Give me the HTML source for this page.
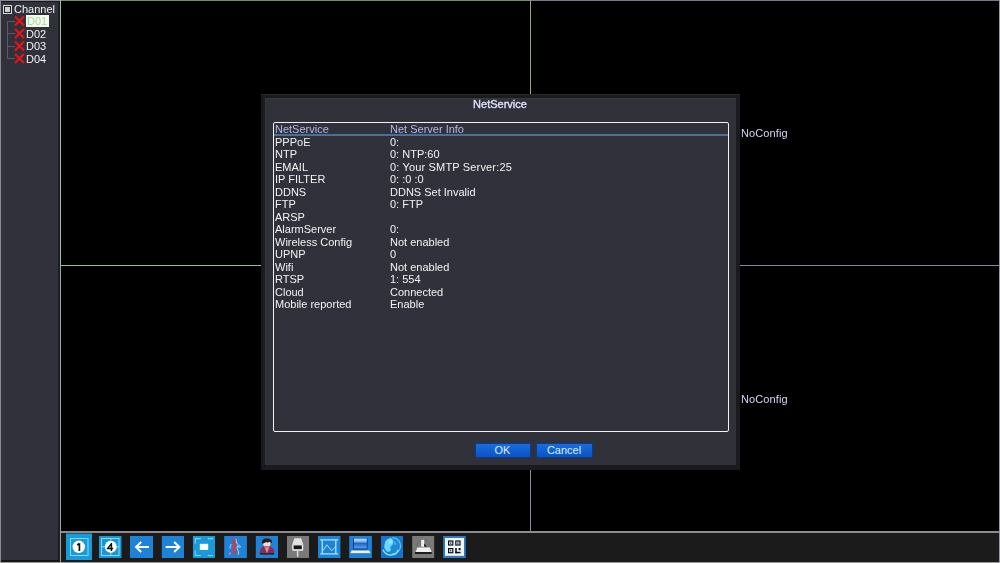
<!DOCTYPE html>
<html><head><meta charset="utf-8">
<style>
*{margin:0;padding:0;box-sizing:border-box}
html,body{width:1000px;height:563px;overflow:hidden;background:#000;font-family:"Liberation Sans",sans-serif;font-size:11px}
.a{position:absolute}
#left{left:0;top:0;width:60px;height:563px;background:#31313c;border-left:1px solid #8a8a92;border-top:1px solid #8a8a92;border-bottom:1px solid #9a9a9a}
#left .inner{position:absolute;left:0;top:0;right:0;bottom:0;border-top:1px solid #18181c;border-bottom:2px solid #141416;border-right:2px solid #1e1e22}
.t{will-change:transform;white-space:nowrap;line-height:12.5px;color:#f2f2f2}
.vl{width:1px}
.hl{height:1px}
#tb{left:61px;top:531px;width:939px;height:32px;background:#1b1b1b;border-top:2px solid #8c8c8e;border-bottom:1px solid #9a9a9a}
.ic{position:absolute;top:536px;width:22px;height:22px}
#dlg{left:261px;top:94px;width:479px;height:376px;background:#1a1b1f;border-top:1px solid #2a2a2c}
#dbody{left:265px;top:98px;width:471px;height:367px;background:#31313a;border-left:1px solid #38383c;border-top:1px solid #38383c}
#list{left:273px;top:122px;width:456px;height:310px;border:1px solid #f2f2f2;border-radius:2px;background:#31313c}
.btn{position:absolute;top:443px;height:15px;width:57px;background:linear-gradient(#1a6ce0,#0d52c2);border:1px solid #0a3c8e;color:#d8f2ff;text-align:center;line-height:13px;font-size:11px}
</style></head><body>

<!-- left channel panel -->
<div id="left" class="a"><div class="inner"></div></div>
<!-- checkbox -->
<div class="a" style="left:3px;top:5px;width:9px;height:9px;border:1px solid #d8d8d8;background:#222"></div>
<div class="a" style="left:5px;top:7px;width:5px;height:5px;background:#d0d0d0"></div>
<div class="a t" style="left:14px;top:3px">Channel</div>
<!-- tree lines -->
<div class="a" style="left:7px;top:21px;width:1px;height:38px;background:#5a5a64"></div>
<div class="a" style="left:7px;top:21px;width:8px;height:1px;background:#5a5a64"></div>
<div class="a" style="left:7px;top:33px;width:8px;height:1px;background:#5a5a64"></div>
<div class="a" style="left:7px;top:46px;width:8px;height:1px;background:#5a5a64"></div>
<div class="a" style="left:7px;top:58px;width:8px;height:1px;background:#5a5a64"></div>
<!-- red X icons -->
<svg class="a" style="left:14px;top:15px" width="11" height="50" viewBox="0 0 11 50">
<defs><filter id="bx" x="-20%" y="-5%" width="140%" height="110%"><feGaussianBlur stdDeviation="0.45"/></filter></defs><g stroke="#e01818" stroke-width="2.4" stroke-linecap="butt" filter="url(#bx)">
<path d="M1 1.5 L10 10.5 M10 1.5 L1 10.5"/>
<path d="M1 14 L10 23 M10 14 L1 23"/>
<path d="M1 26.5 L10 35.5 M10 26.5 L1 35.5"/>
<path d="M1 39 L10 48 M10 39 L1 48"/>
</g></svg>
<div class="a" style="left:26px;top:15px;width:23px;height:12px;background:#f4faf0"></div>
<div class="a t" style="left:27px;top:15.3px;color:#9fdc90">D01</div>
<div class="a t" style="left:26px;top:27.8px">D02</div>
<div class="a t" style="left:26px;top:40.3px">D03</div>
<div class="a t" style="left:26px;top:52.8px">D04</div>

<!-- grid lines -->
<div class="a" style="left:60px;top:0;width:471px;height:1px;background:#6e906e"></div>
<div class="a" style="left:60px;top:0;width:1px;height:266px;background:#98c098"></div>
<div class="a" style="left:530px;top:0;width:1px;height:266px;background:#88b088"></div>
<div class="a" style="left:60px;top:265px;width:471px;height:1px;background:#98c098"></div>
<div class="a" style="left:531px;top:0;width:469px;height:1px;background:#77768a"></div>
<div class="a" style="left:60px;top:266px;width:1px;height:297px;background:#a0a0a8"></div>
<div class="a" style="left:530px;top:266px;width:1px;height:266px;background:#8a889a"></div>
<div class="a" style="left:531px;top:265px;width:469px;height:1px;background:#8a889a"></div>

<div class="a t" style="left:741.3px;top:126.8px;color:#d4d4f6;letter-spacing:0.12px">NoConfig</div>
<div class="a t" style="left:741.3px;top:392.8px;color:#d4d4f6;letter-spacing:0.12px">NoConfig</div>

<!-- toolbar -->
<div id="tb" class="a"></div>
<div class="a" style="left:999px;top:0;width:1px;height:563px;background:#9a98a8"></div>
<svg class="a" style="left:0;top:528px" width="500" height="35" viewBox="0 528 500 35">
<!-- 1 selected -->
<rect x="66" y="533.5" width="26" height="26.5" fill="#1a9ad8"/>
<rect x="70.5" y="538.5" width="17.5" height="17" fill="none" stroke="#7ddcff" stroke-width="1"/>
<circle cx="78.8" cy="546.8" r="6.2" fill="#fff"/>
<path d="M79.4 543.2V550.9M79.4 543.4L77.2 545.2" stroke="#111" stroke-width="1.7" fill="none"/>
<!-- 4 -->
<rect x="99" y="536" width="22.5" height="22" fill="#1a96d4"/>
<rect x="101.5" y="538.5" width="17.5" height="17" fill="none" stroke="#7ddcff" stroke-width="1"/>
<path d="M110.8 538.5V555.5M101.5 546.8H119" stroke="#7ddcff" stroke-width="1"/>
<circle cx="110.8" cy="546.8" r="6" fill="#fff"/>
<path d="M111.4 550.9V543.6L107.5 548.6H113.2" stroke="#111" stroke-width="1.5" fill="none" stroke-linejoin="round"/>
<!-- left arrow -->
<rect x="130" y="536" width="23" height="22" fill="#1e82d6"/>
<path d="M135.5 547H149M141.2 542L136 547L141.2 552" stroke="#fff" stroke-width="2" fill="none"/>
<!-- right arrow -->
<rect x="161.8" y="536" width="22.2" height="22" fill="#1e82d6"/>
<path d="M165.7 547H179.2M174.2 542L179.4 547L174.2 552" stroke="#fff" stroke-width="2" fill="none"/>
<!-- fullscreen -->
<rect x="193" y="536" width="22" height="22" fill="#1a9ad8"/>
<path d="M195.3 543.5V538.6H200.8M207.8 538.6H213M195.3 550.6V555.5H200.8M207.8 555.5H213" stroke="#70d8ff" stroke-width="1.1" fill="none"/>
<rect x="199.8" y="543.8" width="8.4" height="6.1" fill="#fff"/>
<!-- walking person -->
<rect x="224.2" y="536" width="22.7" height="22" fill="#1e82d6"/>
<g filter="url(#bx2)"><path d="M234.6 538.6c1.4 0 1.8 1.4 1.6 3l0.4 4 -0.2 4.5 0.4 4.5h-2.2l-0.8-3.5 -1.6 3.4h-1.8l1.6-4.6 0.4-4.2 -0.6-3.3c-0.3-2 0.8-3.8 2.8-3.8z" fill="#a8486c"/>
<path d="M235.6 538.8l1 1.6 -0.4 1.6 1.2 2 3.4 2.8 -1.6 0.6 -1.8-1.6 -0.4 2.4 1.6 3.6 -0.4 2.8M231.2 544.2l-1.6 3.6 1.2 0.6M230.4 552.6l-0.8 1.8" stroke="#bfe2ff" stroke-width="0.9" fill="none"/></g>
<!-- user -->
<rect x="255.8" y="536" width="22.2" height="22" fill="#1e82d6"/>
<g filter="url(#bx2)">
<path d="M259.6 554c0-5.5 2.4-8 7.4-8s7.4 2.5 7.4 8z" fill="#8e2c4c"/>
<path d="M264 546.4l3 7 3-7z" fill="#c86a88"/>
<path d="M266.4 548l0.6 5 0.6-5z" fill="#e8d0dc"/>
<path d="M260 553.2h14v1.4h-14z" fill="#14224e"/>
<rect x="263.2" y="541.6" width="7.2" height="4.6" rx="1.6" fill="#f4dccc"/>
<path d="M262 543.4c-0.4-3.4 1.6-4.8 5-4.8s5.4 1.4 5 4.8c-0.8-1-1.6-1.6-2.6-1.7 -0.6 0.6-1.6 0.9-2.4 0.5 -1.4 0-2.6 0.3-3.4 1.2z" fill="#2e1c14"/>
</g>
<!-- camera -->
<rect x="287" y="536" width="22" height="22" fill="#7a7a7a"/>
<path d="M294.4 538.2h6.8l2 6.4h-11z" fill="#e2e2e2"/>
<rect x="292.2" y="544.2" width="11" height="6.6" rx="1" fill="#f2f2f2"/>
<rect x="293.6" y="545.4" width="8.2" height="3.8" fill="#151515"/>
<rect x="296.9" y="551" width="1.4" height="5.8" fill="#e0e0e0"/>
<!-- chart -->
<rect x="318" y="536" width="22.4" height="22" fill="#1e82d6"/>
<path d="M320.2 539.8H338.2M320.2 553.8H338.2M322.3 539.8V553.8M335.8 539.8V553.8" stroke="#a6e6ff" stroke-width="1.3" fill="none"/>
<path d="M323 550.6L326.8 544.8L331.6 550.6L335.4 547" stroke="#a6e6ff" stroke-width="1" fill="none"/>
<!-- laptop -->
<rect x="349.2" y="536" width="22.7" height="22" fill="#1e82d6"/>
<rect x="353" y="538" width="14.5" height="11.5" rx="1" fill="#0a2e78"/>
<rect x="353.8" y="538.5" width="13" height="10" fill="url(#lg)"/>
<path d="M351.6 550.6h17.6l1.4 2.8h-20.4z" fill="#eef2f6"/><rect x="350.2" y="553.2" width="20.4" height="0.8" fill="#5a7aa0"/>
<!-- globe -->
<rect x="381" y="536" width="22" height="22" fill="#1a72cc"/>
<g filter="url(#bx2)">
<circle cx="392.4" cy="545.8" r="8.2" fill="#1f88dc"/>
<path d="M392.4 537.6a8.2 8.2 0 0 1 0 16.4" stroke="#58c8f4" stroke-width="1.3" fill="none"/>
<path d="M385.2 541.5c1.6-2.6 4-3.6 6.4-3.2l2 2.6 -1 3.8 -2.2 2.4 0.4 3.6 -2.6 1.4c-2.2-1-3.6-3-3.9-5.4z" fill="#6ad8fc"/>
<path d="M389 539.5l2.6 0.4 0.4 2.8 -2.4 1.2z" fill="#9ae8ff"/>
<path d="M394 541l2.6 1.8 -0.6 2.8 -2.4 -1.2z" fill="#3aa6ec"/>
<path d="M383 549.8c1.6 3.6 5.2 5.6 9.4 5 3.4-0.6 5.2-2.6 5.6-5" stroke="#80ecff" stroke-width="1.5" fill="none"/>
</g>
<!-- stamp -->
<rect x="412.2" y="536" width="22" height="22" fill="#7a7a7a"/>
<g filter="url(#bx2)">
<path d="M416.5 546c0.4-3.6 3-6.2 6.8-6.2s6.4 2.6 6.8 6.2" stroke="#686868" stroke-width="1" fill="none"/>
<rect x="421.2" y="539.8" width="3" height="7" fill="#f2f2f2"/>
<path d="M424.2 543.4l2.6 3.2h-2.6z" fill="#111"/>
<path d="M417.4 547.4h12.4l1.8 4.6h-16z" fill="#f0f0f0"/>
<rect x="415" y="552" width="16.8" height="2" fill="#1e1e1e"/>
</g>
<!-- QR -->
<rect x="443.1" y="536" width="22.7" height="22" fill="#2a7cc4"/>
<rect x="445" y="538" width="19" height="17.8" fill="#eef8ff"/>
<g fill="#111">
<rect x="448" y="540.4" width="5.4" height="5.2"/><rect x="455.2" y="540.4" width="5.4" height="5.2"/><rect x="448" y="548" width="5.4" height="5.3"/>
<rect x="455.2" y="548" width="1.6" height="5.3"/><rect x="455.2" y="551.8" width="5.4" height="1.5"/><rect x="458.6" y="548" width="2" height="2.2"/>
</g>
<g fill="#eef8ff">
<rect x="449.2" y="541.6" width="3" height="2.8"/><rect x="456.4" y="541.6" width="3" height="2.8"/><rect x="449.2" y="549.2" width="3" height="2.9"/>
</g>
<g fill="#111">
<rect x="450.2" y="542.2" width="1" height="1.6"/><rect x="457.4" y="542.2" width="1" height="1.6"/><rect x="450.2" y="549.8" width="1" height="1.7"/>
</g>
<defs><filter id="bx2" x="-30%" y="-10%" width="160%" height="120%"><feGaussianBlur stdDeviation="0.35"/></filter><linearGradient id="lg" x1="0" y1="0" x2="0" y2="1"><stop offset="0" stop-color="#c4e6ff"/><stop offset="0.3" stop-color="#78baf4"/><stop offset="0.5" stop-color="#2464c4"/><stop offset="1" stop-color="#5aa4ee"/></linearGradient></defs>
</svg>

<!-- dialog -->
<div id="dlg" class="a"></div>
<div id="dbody" class="a"></div>
<div class="a t" style="left:0;width:1000px;text-align:center;top:97.5px;color:#dde0fa;-webkit-text-stroke:0.35px #dde0fa">NetService</div>
<div id="list" class="a"></div>
<div class="a" style="left:274px;top:134px;width:454px;height:2px;background:#4a7094"></div>
<div class="a" style="left:275.3px;top:123px">
<div class="t" style="color:#b2b8ea">NetService</div>
<div class="t">PPPoE</div><div class="t">NTP</div><div class="t">EMAIL</div><div class="t">IP FILTER</div><div class="t">DDNS</div><div class="t">FTP</div><div class="t">ARSP</div><div class="t">AlarmServer</div><div class="t">Wireless Config</div><div class="t">UPNP</div><div class="t">Wifi</div><div class="t">RTSP</div><div class="t">Cloud</div><div class="t">Mobile reported</div>
</div>
<div class="a" style="left:390px;top:123px">
<div class="t" style="color:#b2b8ea">Net Server Info</div>
<div class="t">0:</div><div class="t">0: NTP:60</div><div class="t" style="letter-spacing:0.16px">0: Your SMTP Server:25</div><div class="t">0: :0 :0</div><div class="t">DDNS Set Invalid</div><div class="t">0: FTP</div><div class="t">&nbsp;</div><div class="t">0:</div><div class="t">Not enabled</div><div class="t">0</div><div class="t">Not enabled</div><div class="t">1: 554</div><div class="t">Connected</div><div class="t">Enable</div>
</div>
<div class="btn" style="left:475px;width:56px;text-indent:-1px">OK</div>
<div class="btn" style="left:535.5px;width:57px">Cancel</div>

</body></html>
